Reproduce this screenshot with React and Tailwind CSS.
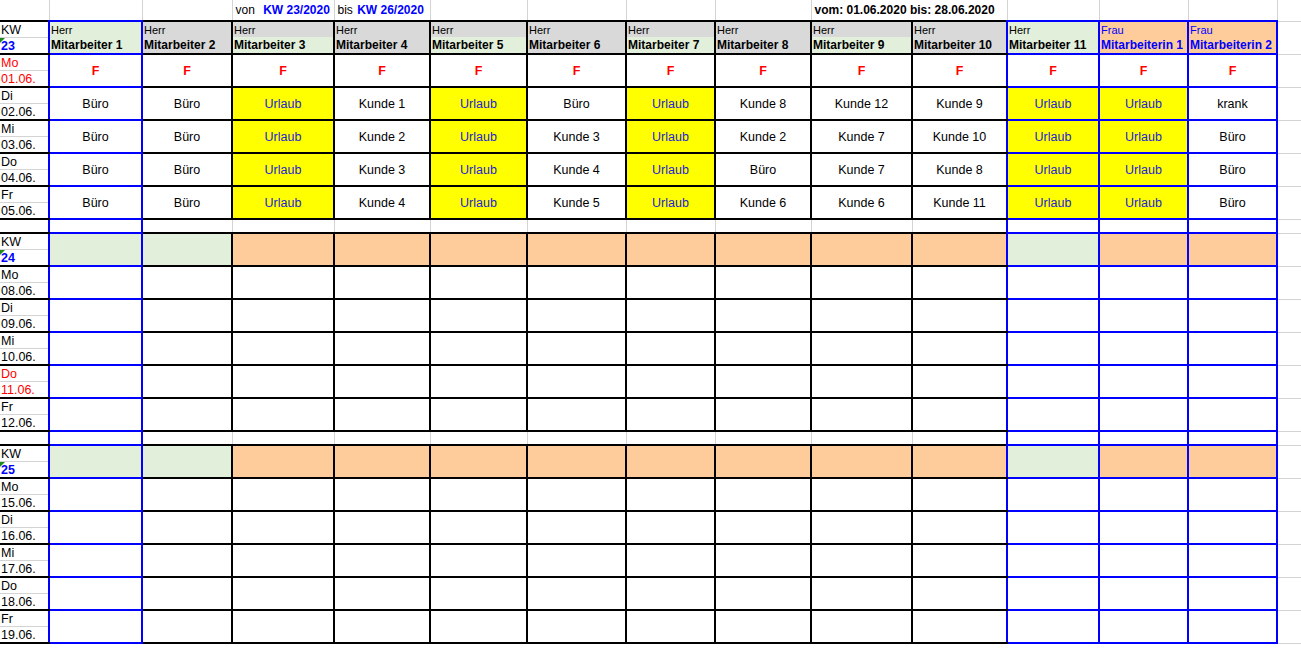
import React from 'react';

const widths = [49, 93, 90, 102, 96, 97, 99, 89, 96, 101, 95, 92, 89, 89, 24];
const blueCols = [1, 11, 12, 13];

const staff = [
  ['Herr', 'Mitarbeiter 1', 'g', 'g'],
  ['Herr', 'Mitarbeiter 2', 'x', 'x'],
  ['Herr', 'Mitarbeiter 3', 'x', 'g'],
  ['Herr', 'Mitarbeiter 4', 'x', 'x'],
  ['Herr', 'Mitarbeiter 5', 'x', 'g'],
  ['Herr', 'Mitarbeiter 6', 'x', 'x'],
  ['Herr', 'Mitarbeiter 7', 'x', 'g'],
  ['Herr', 'Mitarbeiter 8', 'x', 'x'],
  ['Herr', 'Mitarbeiter 9', 'x', 'g'],
  ['Herr', 'Mitarbeiter 10', 'x', 'x'],
  ['Herr', 'Mitarbeiter 11', 'g', 'g'],
  ['Frau', 'Mitarbeiterin 1', 'o', 'o'],
  ['Frau', 'Mitarbeiterin 2', 'o', 'o'],
];
const bgOf = { g: 'bg-[#e2efda]', x: 'bg-[#d9d9d9]', o: 'bg-[#fdcc9a]' };
const kwBg = ['g', 'g', 'o', 'o', 'o', 'o', 'o', 'o', 'o', 'o', 'g', 'o', 'o'];

const week23 = [
  ['Mo', '01.06.', true, Array(13).fill('F')],
  ['Di', '02.06.', false, ['Büro', 'Büro', 'Urlaub', 'Kunde 1', 'Urlaub', 'Büro', 'Urlaub', 'Kunde 8', 'Kunde 12', 'Kunde 9', 'Urlaub', 'Urlaub', 'krank']],
  ['Mi', '03.06.', false, ['Büro', 'Büro', 'Urlaub', 'Kunde 2', 'Urlaub', 'Kunde 3', 'Urlaub', 'Kunde 2', 'Kunde 7', 'Kunde 10', 'Urlaub', 'Urlaub', 'Büro']],
  ['Do', '04.06.', false, ['Büro', 'Büro', 'Urlaub', 'Kunde 3', 'Urlaub', 'Kunde 4', 'Urlaub', 'Büro', 'Kunde 7', 'Kunde 8', 'Urlaub', 'Urlaub', 'Büro']],
  ['Fr', '05.06.', false, ['Büro', 'Büro', 'Urlaub', 'Kunde 4', 'Urlaub', 'Kunde 5', 'Urlaub', 'Kunde 6', 'Kunde 6', 'Kunde 11', 'Urlaub', 'Urlaub', 'Büro']],
];
const empty = Array(13).fill('');
const week24 = [['Mo', '08.06.', false], ['Di', '09.06.', false], ['Mi', '10.06.', false], ['Do', '11.06.', true], ['Fr', '12.06.', false]];
const week25 = [['Mo', '15.06.', false], ['Di', '16.06.', false], ['Mi', '17.06.', false], ['Do', '18.06.', false], ['Fr', '19.06.', false]];

// border colour for a data cell at column c (1..13)
const cellBorder = (c) => {
  if (blueCols.includes(c)) return 'border-2 border-[#0000ff]';
  if (c === 10) return 'border-2 border-black border-r-[#0000ff]';
  return 'border-2 border-black';
};

const KwLabel = ({ top, bottom, red, blue }) => (
  <td className="border-y-2 border-black border-r-2 border-r-[#0000ff] p-0 align-top">
    <div className={`h-[16px] leading-[17px] pl-[1px] border-b border-[#d4d4d4] text-[12.5px] ${red ? 'text-[#ff0000]' : 'text-black'}`}>{top}</div>
    <div className={`relative h-[15px] leading-[16px] pl-[1px] text-[12.5px] ${red ? 'text-[#ff0000]' : blue ? 'text-[#0000ff] font-bold' : 'text-black'}`}>
      {blue && <span className="absolute left-0 top-0 w-0 h-0 border-t-[5px] border-t-[#1e8a1e] border-r-[5px] border-r-transparent"></span>}
      {bottom}
    </div>
  </td>
);

const Extra = () => <td className="border border-[#d4d4d4] p-0"></td>;

const DayRow = ({ d, date, red, vals }) => (
  <tr className="h-[33px]">
    <KwLabel top={d} bottom={date} red={red} />
    {vals.map((v, i) => {
      const c = i + 1;
      const color = v === 'Urlaub' ? 'bg-[#ffff00] text-[#2323d6]' : v === 'F' ? 'text-[#ff0000] font-bold' : 'text-black';
      return (
        <td key={i} className={`${cellBorder(c)} p-0 pt-[2px] text-center text-[12.5px] ${color}`}>
          {v}
        </td>
      );
    })}
    <Extra />
  </tr>
);

const GapRow = () => (
  <tr className="h-[14px]">
    <td className="border-y-2 border-black p-0"></td>
    {empty.map((_, i) => {
      const c = i + 1;
      const cls = blueCols.includes(c)
        ? 'border-x-2 border-[#0000ff]'
        : c === 10
        ? 'border-l border-[#d4d4d4] border-r-2 border-r-[#0000ff]'
        : 'border-x border-[#d4d4d4]';
      return <td key={i} className={`${cls} p-0`}></td>;
    })}
    <Extra />
  </tr>
);

const KwRow = ({ n }) => (
  <tr className="h-[33px]">
    <KwLabel top="KW" bottom={n} blue />
    {kwBg.map((b, i) => (
      <td key={i} className={`${cellBorder(i + 1)} ${bgOf[b]} p-0`}></td>
    ))}
    <Extra />
  </tr>
);

export default function App() {
  return (
    <div className="w-[1301px] h-[653px] overflow-hidden bg-white" style={{ fontFamily: '"Liberation Sans", Arial, sans-serif' }}>
      <table className="table-fixed border-collapse w-[1301px]">
        <colgroup>
          {widths.map((w, i) => (
            <col key={i} style={{ width: w }} />
          ))}
        </colgroup>
        <tbody>
          <tr className="h-[21px] text-[12px]">
            <td className="border-r border-[#d4d4d4] p-0"></td>
            <td className="border-r border-[#d4d4d4] p-0"></td>
            <td className="border-r border-[#d4d4d4] p-0"></td>
            <td className="border-r border-[#d4d4d4] p-0 pl-[3px] whitespace-nowrap">
              von <span className="ml-[5px] font-bold text-[#0000ff]">KW 23/2020</span>
            </td>
            <td className="border-r border-[#d4d4d4] p-0 pl-[3px] whitespace-nowrap">
              bis <span className="ml-[1px] font-bold text-[#0000ff]">KW 26/2020</span>
            </td>
            <td className="border-r border-[#d4d4d4] p-0"></td>
            <td className="border-r border-[#d4d4d4] p-0"></td>
            <td className="border-r border-[#d4d4d4] p-0"></td>
            <td className="border-r border-[#d4d4d4] p-0"></td>
            <td colSpan={2} className="border-r border-[#d4d4d4] p-0 pl-[3px] font-bold whitespace-nowrap">vom: 01.06.2020 bis: 28.06.2020</td>
            <td className="border-r border-[#d4d4d4] p-0"></td>
            <td className="border-r border-[#d4d4d4] p-0"></td>
            <td className="border-r border-[#d4d4d4] p-0"></td>
            <td className="border-r border-[#d4d4d4] p-0"></td>
          </tr>
          <tr className="h-[33px]">
            <KwLabel top="KW" bottom="23" blue />
            {staff.map(([t, name, top, bot], i) => {
              const blue = i >= 11;
              return (
                <td key={i} className={`${cellBorder(i + 1)} p-0 align-top`}>
                  <div className={`h-[15px] leading-[16px] pl-[1px] text-[11px] ${bgOf[top]} ${blue ? 'text-[#0000ff]' : 'text-black'}`}>{t}</div>
                  <div className={`h-[16px] leading-[17px] pl-[1px] text-[12px] font-bold whitespace-nowrap overflow-hidden ${bgOf[bot]} ${blue ? 'text-[#0000ff]' : 'text-black'}`}>{name}</div>
                </td>
              );
            })}
            <Extra />
          </tr>
          {week23.map(([d, date, red, vals]) => (
            <DayRow key={date} d={d} date={date} red={red} vals={vals} />
          ))}
          <GapRow />
          <KwRow n="24" />
          {week24.map(([d, date, red]) => (
            <DayRow key={date} d={d} date={date} red={red} vals={empty} />
          ))}
          <GapRow />
          <KwRow n="25" />
          {week25.map(([d, date, red]) => (
            <DayRow key={date} d={d} date={date} red={red} vals={empty} />
          ))}
        </tbody>
      </table>
    </div>
  );
}
